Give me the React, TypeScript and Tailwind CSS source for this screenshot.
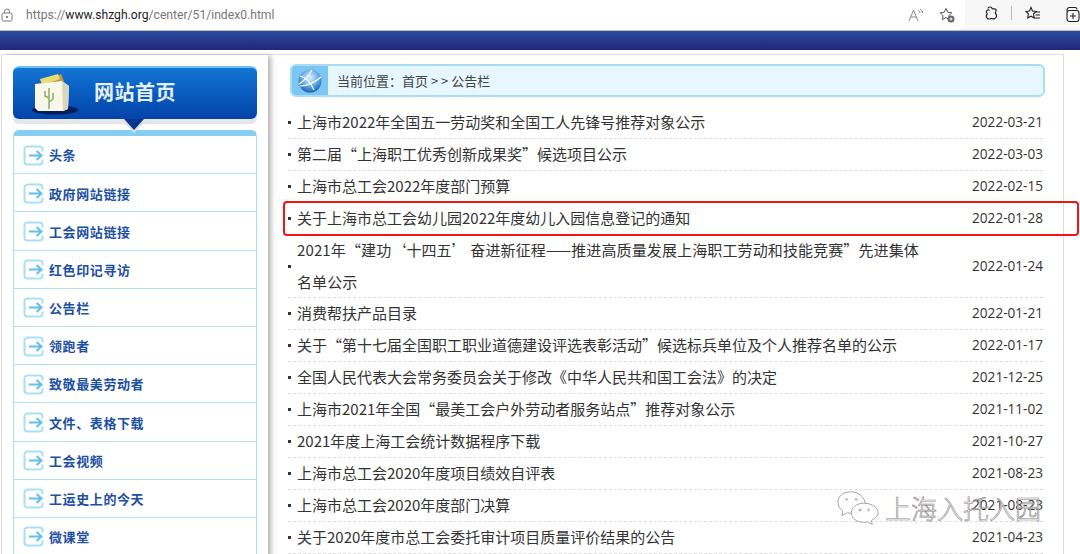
import React from "react";

const FONT = "font-['Noto_Sans_CJK_SC','Noto_Sans',sans-serif]";

const menuItems = [
  "头条",
  "政府网站链接",
  "工会网站链接",
  "红色印记寻访",
  "公告栏",
  "领跑者",
  "致敬最美劳动者",
  "文件、表格下载",
  "工会视频",
  "工运史上的今天",
  "微课堂",
];

type Notice = { id: string; title: string; date: string; tall?: boolean };

const notices: Notice[] = [
  { id: "n1", title: "上海市2022年全国五一劳动奖和全国工人先锋号推荐对象公示", date: "2022-03-21" },
  { id: "n2", title: "第二届“上海职工优秀创新成果奖”候选项目公示", date: "2022-03-03" },
  { id: "n3", title: "上海市总工会2022年度部门预算", date: "2022-02-15" },
  { id: "n4", title: "关于上海市总工会幼儿园2022年度幼儿入园信息登记的通知", date: "2022-01-28" },
  {
    id: "n5",
    title: "2021年“建功‘十四五’ 奋进新征程——推进高质量发展上海职工劳动和技能竞赛”先进集体名单公示",
    date: "2022-01-24",
    tall: true,
  },
  { id: "n6", title: "消费帮扶产品目录", date: "2022-01-21" },
  { id: "n7", title: "关于“第十七届全国职工职业道德建设评选表彰活动”候选标兵单位及个人推荐名单的公示", date: "2022-01-17" },
  { id: "n8", title: "全国人民代表大会常务委员会关于修改《中华人民共和国工会法》的决定", date: "2021-12-25" },
  { id: "n9", title: "上海市2021年全国“最美工会户外劳动者服务站点”推荐对象公示", date: "2021-11-02" },
  { id: "n10", title: "2021年度上海工会统计数据程序下载", date: "2021-10-27" },
  { id: "n11", title: "上海市总工会2020年度项目绩效自评表", date: "2021-08-23" },
  { id: "n12", title: "上海市总工会2020年度部门决算", date: "2021-08-23" },
  { id: "n13", title: "关于2020年度市总工会委托审计项目质量评价结果的公告", date: "2021-04-23" },
];

const ArrowBox = () => (
  <svg width="21" height="21" viewBox="0 0 21 21" fill="none" className="shrink-0">
    <path
      d="M19.500 6.500V4.500a3 3 0 0 0-3-3h-12a3 3 0 0 0-3 3v12a3 3 0 0 0 3 3h12a3 3 0 0 0 3-3V14.500"
      stroke="#a8e0fa"
      strokeWidth="2"
    />
    <path d="M6 10.500h12.500M13.500 6l5 4.500-5 4.500" stroke="#62bfee" strokeWidth="2" />
  </svg>
);

const Globe = () => (
  <svg width="24" height="24" viewBox="0 0 24 24">
    <defs>
      <radialGradient id="globe" cx="50%" cy="35%" r="70%">
        <stop offset="0%" stopColor="#dff2ff" />
        <stop offset="55%" stopColor="#5fa8e6" />
        <stop offset="100%" stopColor="#0f4fa8" />
      </radialGradient>
    </defs>
    <circle cx="12" cy="12" r="11.500" fill="url(#globe)" />
    <path d="M1 15C6 12 10 8 14 1M2 7c5 1 11 6 14 14M2 17c6 0 14-3 21-9" stroke="#fff" strokeWidth="1.200" fill="none" />
  </svg>
);

const GiftBox = () => (
  <svg width="50" height="44" viewBox="0 0 50 44">
    <ellipse cx="24" cy="38" rx="23" ry="4.500" fill="#02194f" opacity="0.9" />
    <path d="M11 11L30 2l3 7-20 6z" fill="#c8963a" />
    <path d="M9 7l18-5 2 5-18 6z" fill="#e8dd72" />
    <path d="M4 12l27-3 7 5-1 23-5 2H7l-3-3z" fill="#f8f7ea" />
    <path d="M31 9l7 5-1 23-5 2z" fill="#d8d6bf" />
    <path d="M18 37V16M18 26l-4-2v-5M18 30l4-3v-6" stroke="#86b068" strokeWidth="1.500" fill="none" />
  </svg>
);

const Chat = () => (
  <svg width="42" height="36" viewBox="0 0 44 36" fill="none" stroke="#a0a0a0" strokeWidth="1">
    <path d="M14 1C6 1 1 6 1 12c0 4 2 7 5 9l-1 5 6-3c2 .5 3 .5 5 .5 5 0 11-3 14-9C29 6 22 1 14 1z" fill="#ffffffcc" />
    <path d="M28 13c-8 0-13 5-13 10s5 10 13 10c2 0 3 0 4-.5l5 2.500-1-4c4-2 7-5 7-8 0-5-6-10-15-10z" fill="#ffffffcc" />
    <circle cx="10" cy="9" r="1" />
    <circle cx="20" cy="9" r="1" />
    <circle cx="24" cy="20" r="1" />
    <circle cx="33" cy="20" r="1" />
  </svg>
);

const BrowserBar = () => (
  <div className="flex h-[30px] bg-[#f7f7f7]">
    <div className="flex w-[965px] items-center rounded-br-lg bg-white">
      <svg width="12" height="14" viewBox="0 0 12 14" fill="none" stroke="#777" className="ml-[1px]">
        <rect x="1" y="5" width="10" height="8" rx="1.500" />
        <path d="M3.500 5V3.500a2.500 2.500 0 0 1 5 0V5" />
        <circle cx="6" cy="9" r="0.800" fill="#777" />
      </svg>
      <div className="ml-[13px] font-['Roboto',sans-serif] text-[12.150px] text-[#777]">
        https://<span className="text-[#222]">www.shzgh.org</span>/center/51/index0.html
      </div>
      <svg width="16" height="14" viewBox="0 0 16 14" fill="none" stroke="#888" className="ml-auto mr-[15px]">
        <path d="M1 13L5.500 2 10 13M3 9h5" />
        <path d="M10 2c1.500 1 2 2 2 3M12 1c1.500 1 2.500 2.500 2.500 4" />
      </svg>
      <svg width="16" height="16" viewBox="0 0 16 16" fill="none" stroke="#555" className="mr-[10px]">
        <path d="M7 1.500l1.800 3.800 4 .5-2.900 2.800.7 4-3.600-2-3.600 2 .7-4L1.200 5.800l4-.5z" />
        <circle cx="12" cy="12" r="3.500" fill="#666" stroke="none" />
        <path d="M10.500 12h3M12 10.500v3" stroke="#fff" />
      </svg>
    </div>
    <svg width="16" height="16" viewBox="0 0 16 16" fill="none" stroke="#222" strokeWidth="1.200" className="ml-[17px] mt-[6px]">
      <path d="M6 2.500c0-2 4-2 4 0 0 1 3-.5 4 1s-1.500 3-.5 4 1.500 2.500.5 4-3 1.500-4 1-3 1.500-4.500 0-1.500-3-.5-4-1.500-2-.5-3.500 3-1.500 3-.5" />
    </svg>
    <div className="ml-[13px] mt-[6px] h-[14px] w-px bg-[#bbb]" />
    <svg width="16" height="16" viewBox="0 0 16 16" fill="none" stroke="#222" strokeWidth="1.100" className="ml-[13px] mt-[6px]">
      <path d="M6 1.500l1.500 3.500 3.500.5-2.500 2.500.7 4L6 10.200 2.700 12l.7-4L1 5.500 4.500 5zM11 6h4M10.500 9H15M9.500 12H15" />
    </svg>
    <svg width="16" height="16" viewBox="0 0 16 16" fill="none" stroke="#222" strokeWidth="1.100" className="ml-[23px] mt-[6px]">
      <path d="M5 1.500h6a2 2 0 0 1 2 2M3 5.500V4a2.500 2.500 0 0 1 2-2.500" />
      <rect x="3" y="4.500" width="12" height="11" rx="2.500" />
      <path d="M9 7v6M6 10h6" />
    </svg>
  </div>
);

const Sidebar = () => (
  <aside className="w-[266px] shrink-0 px-[11px] pt-[11px] shadow-[4px_0_5px_-1px_rgba(0,0,0,0.3)]">
    <div className="relative">
      <div className="flex h-[53px] items-center rounded-md border-t-2 border-[#6cc0f2] bg-gradient-to-b from-[#1475d6] to-[#0543a8] pl-[18px] shadow-[0_5px_0_#e6e6e6]">
        <GiftBox />
        <div className="ml-[13px] pb-[4px] text-[20px] font-bold tracking-[0.500px] text-[#e4eef5]">网站首页</div>
      </div>
      <div className="absolute left-[110px] top-[56px] z-10 size-0 border-x-[11px] border-t-[11px] border-x-transparent border-t-[#e0e0e0]" />
      <div className="absolute left-[111px] top-[53px] z-10 size-0 border-x-[10px] border-t-[11px] border-x-transparent border-t-[#06388f]" />
    </div>
    <div className="mt-[11px] rounded-t-md border-x border-t-[6px] border-[#a9dffa] border-t-[#84cdf3]">
      {menuItems.map((item) => (
        <div
          key={item}
          className="flex h-[38.200px] items-center gap-[5px] border-b-[1.500px] border-[#b2e0f8] pl-[9px] pt-[1px] text-[13px] font-bold tracking-[0.600px] text-[#1d4fa3]"
        >
          <ArrowBox />
          <span>{item}</span>
        </div>
      ))}
    </div>
  </aside>
);

const NoticeRow = ({ notice }: { notice: Notice }) => (
  <li
    className={`flex items-center border-b border-dashed border-[#dddddd] ${
      notice.tall ? "h-[63px]" : "h-[32px]"
    }`}
  >
    <div className="size-[3px] shrink-0 bg-[#333]" />
    <div
      className={`ml-[6px] min-w-0 text-[15px] text-[#333] ${
        notice.tall ? "w-[630px] leading-[32px] tracking-[0.120px]" : "whitespace-nowrap"
      }`}
    >
      {notice.title}
    </div>
    <div className="ml-auto font-['Open_Sans',sans-serif] text-[13.600px] text-[#333]">{notice.date}</div>
  </li>
);

export default function App() {
  return (
    <div className={`relative h-[554px] w-[1080px] overflow-hidden bg-white ${FONT}`}>
      <BrowserBar />
      <div className="h-[20px] border-t border-[#bdbdbd] bg-gradient-to-b from-[#2c4da0] to-[#1f2778]" />
      <div className="ml-[1px] mt-[4px] flex h-[520px] w-[1063px] border border-b-0 border-[#dcdcdc]">
        <Sidebar />
        <main className="ml-[20px] w-[755px] pt-[9px]">
          <div className="ml-[2px] flex h-[33px] w-[755px] items-center overflow-hidden rounded-md border-2 border-[#a6dcf8] bg-[#e6f7ff]">
            <div className="flex h-full w-[36px] items-center justify-center bg-[#7cc6f2]">
              <Globe />
            </div>
            <div className="ml-[9px] text-[13px] text-[#444]">当前位置：首页 &gt; &gt; 公告栏</div>
          </div>
          <ul className="mt-[10px] w-[755px]">
            {notices.map((notice) => (
              <NoticeRow key={notice.id} notice={notice} />
            ))}
          </ul>
        </main>
      </div>

      {/* annotation and watermark lie over the page */}
      <div className="absolute left-[283px] top-[201px] h-[35px] w-[796px] rounded-[4px] border-[2.500px] border-[#f01414]" />
      <div className="absolute left-[837px] top-[488px] flex items-center gap-[6px]">
        <Chat />
        <span className="text-[26px] font-light text-white/70 [-webkit-text-stroke:0.600px_#888]">上海入托入园</span>
      </div>
    </div>
  );
}
